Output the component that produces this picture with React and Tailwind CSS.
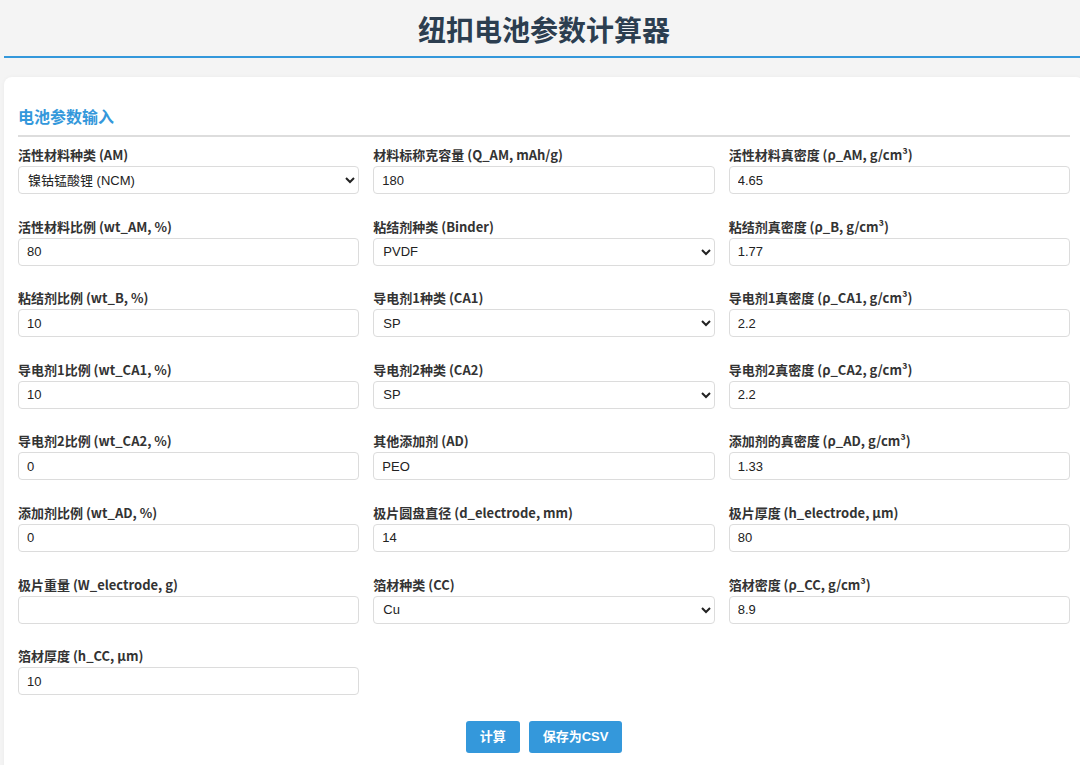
import { useState } from 'react';

const CJK = { fontFamily: '"Noto Sans CJK SC", "Noto Sans", sans-serif' };
const LATIN = { fontFamily: '"Liberation Sans", "Noto Sans CJK SC", sans-serif' };

const fields = [
    { label: '活性材料种类 (AM)', type: 'select', value: '镍钴锰酸锂 (NCM)', options: ['镍钴锰酸锂 (NCM)', '磷酸铁锂 (LFP)', '钴酸锂 (LCO)'] },
    { label: '材料标称克容量 (Q_AM, mAh/g)', value: '180' },
    { label: '活性材料真密度 (ρ_AM, g/cm³)', value: '4.65' },
    { label: '活性材料比例 (wt_AM, %)', value: '80' },
    { label: '粘结剂种类 (Binder)', type: 'select', value: 'PVDF', options: ['PVDF', 'CMC', 'SBR'] },
    { label: '粘结剂真密度 (ρ_B, g/cm³)', value: '1.77' },
    { label: '粘结剂比例 (wt_B, %)', value: '10' },
    { label: '导电剂1种类 (CA1)', type: 'select', value: 'SP', options: ['SP', 'CNT', 'KS-6'] },
    { label: '导电剂1真密度 (ρ_CA1, g/cm³)', value: '2.2' },
    { label: '导电剂1比例 (wt_CA1, %)', value: '10' },
    { label: '导电剂2种类 (CA2)', type: 'select', value: 'SP', options: ['SP', 'CNT', 'KS-6'] },
    { label: '导电剂2真密度 (ρ_CA2, g/cm³)', value: '2.2' },
    { label: '导电剂2比例 (wt_CA2, %)', value: '0' },
    { label: '其他添加剂 (AD)', value: 'PEO' },
    { label: '添加剂的真密度 (ρ_AD, g/cm³)', value: '1.33' },
    { label: '添加剂比例 (wt_AD, %)', value: '0' },
    { label: '极片圆盘直径 (d_electrode, mm)', value: '14' },
    { label: '极片厚度 (h_electrode, μm)', value: '80' },
    { label: '极片重量 (W_electrode, g)', value: '' },
    { label: '箔材种类 (CC)', type: 'select', value: 'Cu', options: ['Cu', 'Al'] },
    { label: '箔材密度 (ρ_CC, g/cm³)', value: '8.9' },
    { label: '箔材厚度 (h_CC, μm)', value: '10' },
];

function Field({ field }) {
    const [value, setValue] = useState(field.value);
    const boxClass = 'block w-full h-[28px] border border-[#dcdcdc] rounded-[4px] bg-white text-[13px] text-[#222] focus:outline-none';

    return (
        <div className="flex flex-col">
            <label className="text-[13px] leading-[18px] font-bold text-[#333] mb-[2px]" style={CJK}>
                {field.label}
            </label>
            {field.type === 'select' ? (
                <select value={value} onChange={(e) => setValue(e.target.value)} className={`${boxClass} pl-[5px] pr-[4px]`} style={LATIN}>
                    {field.options.map((opt) => (
                        <option key={opt}>{opt}</option>
                    ))}
                </select>
            ) : (
                <input type="text" value={value} onChange={(e) => setValue(e.target.value)} className={`${boxClass} px-[8px]`} style={LATIN} />
            )}
        </div>
    );
}

export default function App() {
    return (
        <div className="w-full min-h-screen overflow-hidden bg-[#f4f4f4]">
            <div className="w-[1080px] ml-[4px]">
                <header className="pt-[12px] pb-[10px] border-b-2 border-[#3498db]">
                    <h1 className="text-center text-[28px] leading-[34px] font-bold text-[#2c3e50]" style={CJK}>
                        纽扣电池参数计算器
                    </h1>
                </header>

                <main className="mt-[19px] bg-white rounded-[8px] shadow-[0_0_4px_rgba(0,0,0,0.04)] px-[14px] pt-[28px] pb-[30px]">
                    <h2 className="text-[16px] leading-[22px] font-bold text-[#3498db] pb-[8px] border-b-2 border-[#dddddd]" style={CJK}>
                        电池参数输入
                    </h2>

                    <div className="mt-[9px] grid grid-cols-3 gap-x-[14px] gap-y-[23.6px]">
                        {fields.map((f) => (
                            <Field key={f.label} field={f} />
                        ))}
                    </div>

                    <div className="mt-[26px] flex justify-center gap-[9px]">
                        <button className="h-[32px] px-[14px] bg-[#3498db] hover:bg-[#2980b9] text-white text-[13px] font-bold rounded-[3px]" style={LATIN}>
                            计算
                        </button>
                        <button className="h-[32px] px-[14px] bg-[#3498db] hover:bg-[#2980b9] text-white text-[13px] font-bold rounded-[3px]" style={LATIN}>
                            保存为CSV
                        </button>
                    </div>
                </main>
            </div>
        </div>
    );
}
